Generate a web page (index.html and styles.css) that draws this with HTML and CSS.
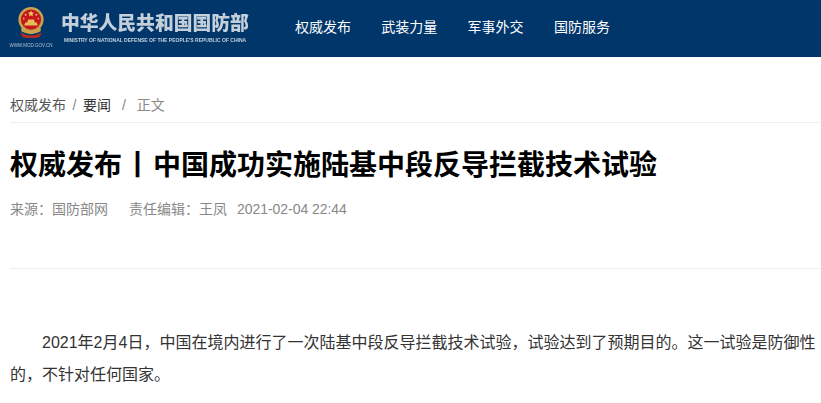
FILE: index.html
```html
<!DOCTYPE html>
<html lang="zh-CN">
<head>
<meta charset="utf-8">
<title>权威发布</title>
<link rel="stylesheet" href="styles.css">
</head>
<body>
<header class="top">
  <div class="logo">
    <div class="emblem-box">
      <svg class="emblem" viewBox="0 0 30 32" width="30" height="31" aria-hidden="true">
        <path d="M4 26 Q15 33 26 26 L24 31 Q15 34 6 31 Z" fill="#b52a22"/>
        <circle cx="15" cy="13" r="13" fill="#c9a44c"/>
        <circle cx="15" cy="13" r="10.5" fill="#c4161c"/>
        <path d="M8 19 H22 L21 16 H19 L18 13 H12 L11 16 H9 Z" fill="#e6bd55"/>
        <path d="M15 3.5 l1 2.2 2.3.2-1.8 1.5.6 2.3-2.1-1.2-2.1 1.2.6-2.3-1.8-1.5 2.3-.2 Z" fill="#eac75f"/>
        <circle cx="9.5" cy="8" r="1" fill="#eac75f"/><circle cx="20.5" cy="8" r="1" fill="#eac75f"/>
        <circle cx="7.5" cy="12" r=".8" fill="#eac75f"/><circle cx="22.500" cy="12" r=".8" fill="#eac75f"/>
        <path d="M5 21 Q15 29 25 21 L25 25 Q15 31 5 25 Z" fill="#c9a44c"/>
      </svg>
      <span class="url">WWW.MOD.GOV.CN</span>
    </div>
    <div class="site">
      <div class="site-cn">中华人民共和国国防部</div>
      <div class="site-en">MINISTRY OF NATIONAL DEFENSE OF THE PEOPLE'S REPUBLIC OF CHINA</div>
    </div>
  </div>
  <nav class="nav">
    <a>权威发布</a><a>武装力量</a><a>军事外交</a><a>国防服务</a>
  </nav>
</header>
<main class="main">
  <div class="crumb"><span>权威发布</span><i class="s1">/</i><span class="cur">要闻</span><i class="s2">/</i><em>正文</em></div>
  <h1 class="title">权威发布<span class="bar">丨</span>中国成功实施陆基中段反导拦截技术试验</h1>
  <div class="meta"><span>来源：国防部网</span><span>责任编辑：王凤</span><span class="date">2021-02-04 22:44</span></div>
  <div class="body">
    <p>2021年2月4日，中国在境内进行了一次陆基中段反导拦截技术试验，试验达到了预期目的。这一试验是防御性的，不针对任何国家。</p>
  </div>
</main>
</body>
</html>
```
FILE: styles.css
```css
* { box-sizing: border-box; }
html, body { margin: 0; padding: 0; height: 403px; overflow: hidden; background: #fff; }
body { font-family: "Liberation Sans", "Noto Sans CJK SC", sans-serif; color: #000; }
.top { height: 57px; background: #01366a; display: flex; }
.logo { width: 295px; padding: 7px 0 0 10px; display: flex; align-items: flex-start; filter: blur(0.35px); }
.emblem-box { width: 42px; display: flex; flex-direction: column; align-items: center; }
.emblem { display: block; }
.url { font-size: 4.5px; color: #b4c1cf; line-height: 9px; margin-top: 3px; white-space: nowrap; }
.site { margin-left: 9px; padding-top: 3px; color: #c3cfdb; }
.site-cn { font-size: 18.8px; font-weight: 900; line-height: 27px; white-space: nowrap; }
.site-en { font-size: 5px; font-weight: 700; line-height: 6px; margin-left: 3px; white-space: nowrap; }
.nav { display: flex; gap: 30.3px; padding-top: 17px; }
.nav a { color: #fff; font-size: 14px; line-height: 20px; height: 20px; }
.main { padding: 38px 0 0 10px; }
.crumb { font-size: 14px; color: #555; height: 28px; line-height: 20px; border-bottom: 1px solid #eee; }
.crumb i { font-style: normal; color: #888; }
.crumb .s1 { margin: 0 6.5px; }
.crumb .s2 { margin: 0 11px; }
.crumb .cur { color: #333; }
.crumb em { font-style: normal; color: #888; }
.title { margin: 22px 0 0; font-size: 28px; line-height: 42px; font-weight: 700; white-space: nowrap; }
.bar { padding: 0 1.5px; }
.meta { margin-top: 12px; font-size: 14px; line-height: 20px; color: #888; display: flex; gap: 21px; height: 70px; border-bottom: 1px solid #eee; }
.meta .date { margin-left: -11px; letter-spacing: -0.05px; }
.body { padding-top: 58px; font-size: 16px; line-height: 32px; color: #333; }
.body p { margin: 0; text-indent: 32px; }
```
